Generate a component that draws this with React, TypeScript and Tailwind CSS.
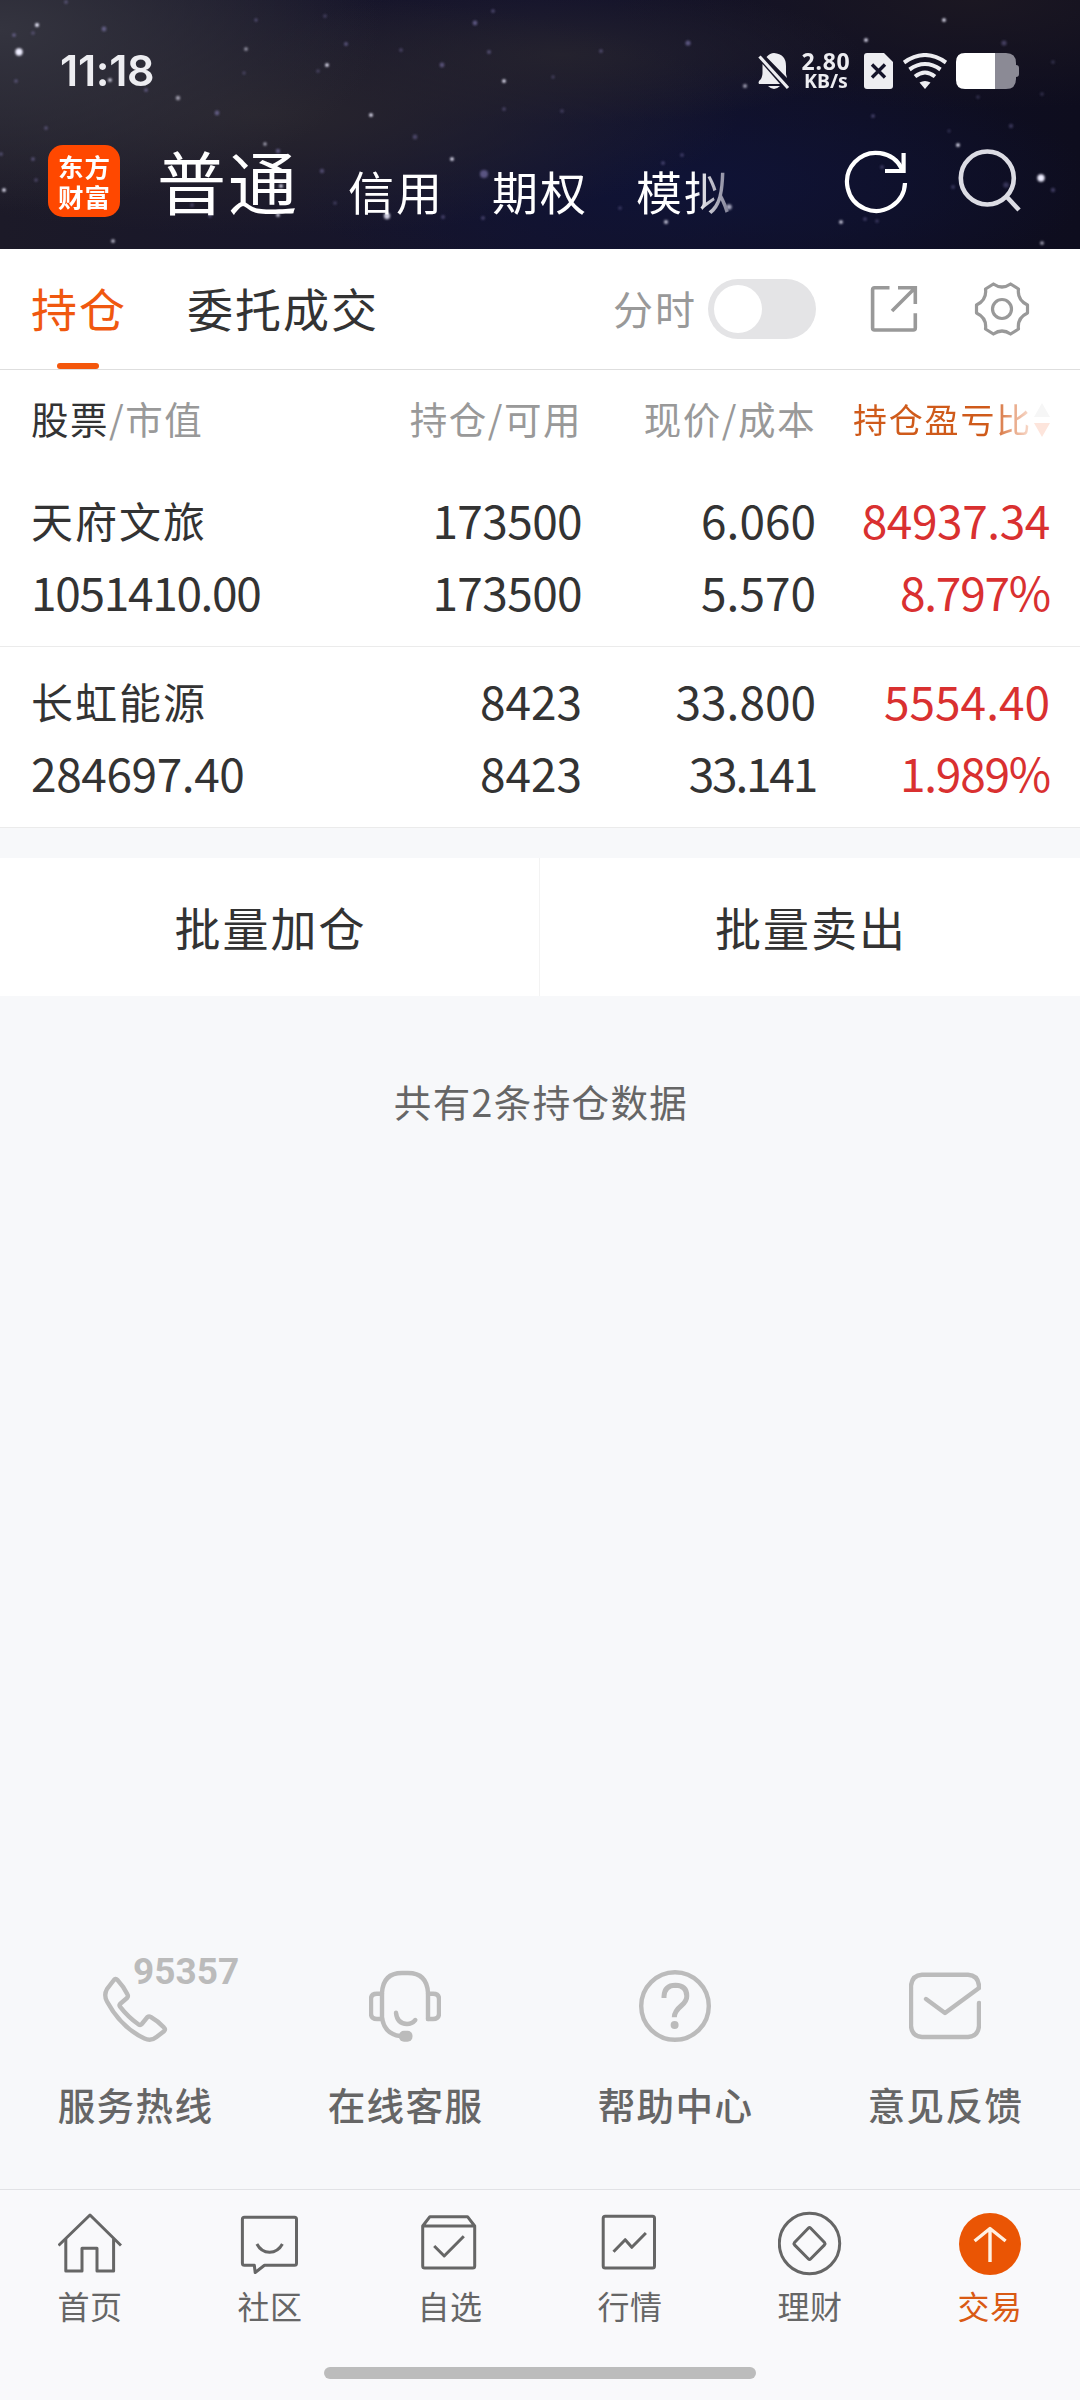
import { FC, ReactNode } from "react";
import clsx from "clsx";

type Holding = {
  name: string;
  value: string;
  amount: string;
  available: string;
  price: string;
  cost: string;
  profit: string;
  ratio: string;
};

const holdings: Holding[] = [
  {
    name: "天府文旅",
    value: "1051410.00",
    amount: "173500",
    available: "173500",
    price: "6.060",
    cost: "5.570",
    profit: "84937.34",
    ratio: "8.797%",
  },
  {
    name: "长虹能源",
    value: "284697.40",
    amount: "8423",
    available: "8423",
    price: "33.800",
    cost: "33.141",
    profit: "5554.40",
    ratio: "1.989%",
  },
];

// x, y, radius, opacity
const stars: number[][] = [
  [19, 52, 4, 1], [37, 25, 2.2, 1], [104, 29, 2.6, 0.5], [14, 35, 2, 0.5], [33, 33, 2, 0.35],
  [66, 2, 2, 0.4], [16, 81, 2, 0.4], [178, 98, 2.4, 0.6], [146, 90, 2, 0.5], [110, 80, 2, 0.9],
  [217, 113, 2.6, 0.5], [46, 128, 2, 0.4], [256, 20, 1.8, 0.4], [246, 49, 2, 0.6], [244, 73, 1.8, 0.3],
  [327, 65, 2, 1], [318, 71, 2, 0.3], [346, 44, 2.2, 0.45], [325, 16, 2, 0.3], [371, 115, 2, 1],
  [401, 50, 2, 0.35], [442, 65, 2.6, 0.45], [475, 23, 2.6, 0.5], [493, 11, 2, 0.4], [489, 52, 2.2, 0.4],
  [504, 81, 2, 1], [504, 109, 2, 0.35], [415, 137, 2.6, 0.35], [452, 159, 2, 1], [484, 174, 4.4, 0.5],
  [322, 171, 2.4, 0.4], [265, 144, 1.8, 0.7], [278, 151, 2.4, 0.5], [281, 186, 2, 1], [278, 215, 2, 0.9],
  [387, 216, 3.4, 0.85], [443, 217, 2.2, 0.35], [483, 218, 2.2, 0.35], [335, 203, 2, 0.3], [113, 241, 2, 0.8],
  [4, 190, 2, 1], [33, 159, 2, 0.45], [36, 180, 2, 0.35], [1, 154, 2, 0.4], [192, 205, 2, 0.4],
  [210, 216, 1.8, 0.4], [601, 51, 2, 0.4], [688, 43, 2.8, 0.5], [553, 77, 1.8, 0.3], [562, 111, 2, 0.3],
  [745, 86, 2.2, 0.65], [866, 40, 2, 1], [944, 20, 2, 1], [1004, 43, 2.8, 0.35], [1053, 62, 2, 0.25],
  [873, 116, 2, 0.4], [958, 145, 2, 1], [1011, 126, 2.4, 0.3], [1041, 178, 4, 1], [1053, 190, 2.4, 0.35],
  [666, 222, 2.2, 0.8], [841, 222, 2, 0.9], [865, 219, 2, 0.35], [877, 221, 2, 0.3], [1042, 243, 2, 0.7],
  [682, 155, 2, 0.35], [663, 163, 2, 0.4], [729, 207, 3, 0.7], [882, 167, 2, 0.35], [1006, 185, 3, 0.3],
  [953, 187, 2.2, 0.3], [620, 208, 2, 0.3], [978, 97, 2, 0.25], [1042, 94, 2, 0.25], [949, 131, 1.8, 0.25],
];

const Sky: FC = () => (
  <svg className="absolute inset-0" width="1080" height="249" viewBox="0 0 1080 249">
    <defs>
      <filter id="soft">
        <feGaussianBlur stdDeviation="0.8" />
      </filter>
    </defs>
    <g filter="url(#soft)">
      {stars.map(([x, y, r, o]) => (
        <circle
          key={`${x}-${y}`}
          cx={x}
          cy={y}
          r={r * 0.92}
          fill={o < 0.6 ? "#8f86c4" : "#eeedff"}
          opacity={o < 0.6 ? o * 1.1 : o}
        />
      ))}
    </g>
  </svg>
);

const StatusBar: FC = () => (
  <div className="relative flex h-[142px] items-center pr-[60px] pl-[60px] text-[#ededf1]">
    <span className="-mt-px font-['Inter'] text-[43px] font-semibold tracking-[-0.3px]">11:18</span>
    <div className="ml-auto flex items-center">
      <svg width="32" height="38" viewBox="0 0 32 38" fill="currentColor">
        <path d="M8.500 5 Q12 1 16 1 Q28 2 28 14 V22 L29 26 Z" />
        <path d="M4.500 12 L22 32 H1 Q0 31 1 29 Q4.500 26 4.500 21 Z" />
        <path d="M10 34 H22 Q16 40 10 34 Z" />
        <path d="M1.500 4.500 L30 36" stroke="currentColor" strokeWidth="3.2" />
      </svg>
      <div className="ml-[11px] flex w-[50px] flex-col items-center font-['Noto_Sans'] font-bold">
        <span className="text-[23px] leading-[20px] tracking-[0.8px]">2.80</span>
        <span className="text-[19.5px] leading-[20px]">KB/s</span>
      </div>
      <svg className="ml-[13px]" width="29" height="36" viewBox="0 0 29 36">
        <path d="M3 0 H20 L29 9 V33 Q29 36 26 36 H3 Q0 36 0 33 V3 Q0 0 3 0 Z" fill="currentColor" />
        <path d="M8 11.500 L21 24.500 M21 11.500 L8 24.500" stroke="#14132a" strokeWidth="3.4" />
      </svg>
      <svg
        className="ml-[10px]"
        width="44"
        height="36"
        viewBox="0 0 44 36"
        fill="none"
        stroke="currentColor"
        strokeWidth="4"
      >
        <path d="M1 9.500 Q22 -5.500 43 9.500" />
        <path d="M6.500 16.500 Q22 5.500 37.500 16.500" />
        <path d="M12 23.500 Q22 15.500 32 23.500" />
        <path d="M16.500 29.500 Q22 26.500 27.500 29.500 L22 36 Z" fill="currentColor" stroke="none" />
      </svg>
      <svg className="ml-[9px]" width="64" height="36" viewBox="0 0 64 36">
        <path d="M39 0 H50 Q60 0 60 10 V12 Q63 12 63 15 V21 Q63 24 60 24 V26 Q60 36 50 36 H39 Z" fill="#8b8a95" />
        <path d="M9 0 H39 V36 H9 Q0 36 0 27 V9 Q0 0 9 0 Z" fill="#fff" />
      </svg>
    </div>
  </div>
);

const Header: FC = () => (
  <header className="relative h-[249px] shrink-0 overflow-hidden bg-[radial-gradient(ellipse_380px_180px_at_0%_12%,#34343f_0%,transparent_100%),radial-gradient(ellipse_480px_120px_at_24%_46%,#28252e_0%,transparent_100%),radial-gradient(ellipse_300px_70px_at_52%_22%,#23212e_0%,transparent_100%),radial-gradient(ellipse_400px_120px_at_64%_74%,#0f1336_0%,transparent_100%),radial-gradient(ellipse_360px_110px_at_90%_0%,#1b1722_0%,transparent_100%),linear-gradient(90deg,#1c1a28_0%,#14132c_50%,#0f0f24_80%,#0e0d1e_100%)]">
    <Sky />
    <StatusBar />
    <div className="relative flex h-[107px] pl-[48px]">
      <div className="mt-[3px] flex h-[72px] w-[72px] flex-col items-center justify-center rounded-[15px] bg-[#ff4800] text-[25.5px] leading-[30px] font-bold tracking-[1px] text-white">
        <span className="-mr-px">东方</span>
        <span className="-mr-px">财富</span>
      </div>
      <div className="-mt-px ml-[37px] flex items-baseline whitespace-nowrap text-white">
        <span className="text-[69px] leading-[78px] tracking-[2px]">普通</span>
        <div className="ml-[49px] flex gap-[48px] text-[46px] leading-[60px] tracking-[2px]">
          <span>信用</span>
          <span>期权</span>
          <span className="bg-[linear-gradient(90deg,#fff_60%,#77778f_100%)] bg-clip-text text-transparent">模拟</span>
        </div>
      </div>
      <svg
        className="absolute top-[8px] left-[844px]"
        width="64"
        height="64"
        viewBox="0 0 64 64"
        fill="none"
        stroke="#fff"
        strokeWidth="4.200"
      >
        <path d="M61 33 A29 29 0 1 1 58 19" />
        <path d="M59.600 3 V21 H41" />
      </svg>
      <svg
        className="absolute top-[6px] left-[957px]"
        width="66"
        height="66"
        viewBox="0 0 66 66"
        fill="none"
        stroke="#dcdce4"
        strokeWidth="4.600"
      >
        <circle cx="30.300" cy="30" r="26.500" />
        <path d="M49 48 L62 62" />
      </svg>
    </div>
  </header>
);

const TabBar: FC = () => (
  <div className="flex h-[121px] shrink-0 items-center border-b border-[#dedede] pl-[31px] text-[46px] tracking-[2px] text-[#333]">
    <div className="relative flex h-full items-center pb-[3px] text-[#f0580f]">
      持仓
      <span className="absolute bottom-0 left-[26px] h-[6px] w-[42px] rounded-full bg-[#f4570c]" />
    </div>
    <span className="-mt-[3px] ml-[60px]">委托成交</span>
    <span className="-mt-[2px] ml-[234px] text-[40px] text-[#999]">分时</span>
    <div className="ml-[11px] flex h-[60px] w-[108px] items-center rounded-full bg-[#e4e4e6] pl-[6px]">
      <div className="h-[48px] w-[48px] rounded-full bg-white" />
    </div>
    <svg
      className="ml-[52px]"
      width="52"
      height="54"
      viewBox="0 0 52 54"
      fill="none"
      stroke="#999"
      strokeWidth="3.600"
    >
      <path d="M21.500 5.700 H6.600 Q4.600 5.700 4.600 7.700 V46 Q4.600 48 6.600 48 H45.300 Q47.300 48 47.300 46 V31.300" />
      <path d="M30 5.700 H47.300 V22 M46.500 6.500 L24 29" />
    </svg>
    <svg
      className="ml-[52px]"
      width="60"
      height="60"
      viewBox="-30 -30 60 60"
      fill="none"
      stroke="#999"
      strokeWidth="3.200"
      strokeLinejoin="round"
    >
      <path d="M-25.500 -4 Q-15 -9 -16.500 -20 L-8.600 -25 Q0 -19 8.600 -25 L16.500 -20 Q15 -9 25.500 -4 V4 Q15 9 16.500 20 L8.600 25 Q0 19 -8.600 25 L-16.500 20 Q-15 9 -25.500 4 Z" />
      <circle r="9.500" />
    </svg>
  </div>
);

const columns = "grid grid-cols-[270px_281px_234px_234px] px-[31px]";

const TableHead: FC = () => (
  <div className={`${columns} h-[96px] shrink-0 items-center text-right text-[37.5px] tracking-[1.5px] text-[#999]`}>
    <span className="text-left">
      <span className="text-[#333]">股票</span>/市值
    </span>
    <span>持仓/可用</span>
    <span>现价/成本</span>
    <div className="flex items-center justify-end text-[34px] tracking-[1.8px]">
      <span className="bg-[linear-gradient(90deg,#cf5a1a_76%,#fbe3d8_100%)] bg-clip-text text-transparent">
        持仓盈亏比
      </span>
      <svg className="mt-[3px] ml-[2px]" width="16" height="36" viewBox="0 0 16 36">
        <path d="M8 1 L16 15 H0 Z" fill="#f6f6f6" />
        <path d="M8 35 L16 21 H0 Z" fill="#fde5dc" />
      </svg>
    </div>
  </div>
);

const Num: FC<{ children: string; className?: string }> = ({ children, className }) => {
  const ones = children.split("1").length - 1;
  const percent = children.endsWith("%");
  return (
    <span
      className={clsx(
        "self-start leading-[66px]",
        percent && "tracking-[-1.2px]",
        !percent && ones === 0 && children.length > 7 && "tracking-[-0.4px]",
        !percent && ones === 1 && "tracking-[-0.6px]",
        ones === 2 && "tracking-[-2.2px]",
        ones === 3 && "tracking-[-1.3px]",
        className
      )}
    >
      {children}
    </span>
  );
};

const HoldingRow: FC<{ item: Holding }> = ({ item }) => (
  <div
    className={`${columns} h-[181px] shrink-0 grid-rows-[72px_72px] items-center border-b border-[#ebebeb] pt-[20px] text-right text-[46px] leading-[72px] text-[#333]`}
  >
    <span className="self-start text-left text-[42px] leading-[68px] tracking-[2px]">{item.name}</span>
    <Num>{item.amount}</Num>
    <Num>{item.price}</Num>
    <Num className="text-[#d93030]">{item.profit}</Num>
    <Num className="text-left">{item.value}</Num>
    <Num>{item.available}</Num>
    <Num>{item.cost}</Num>
    <Num className="text-[#d93030]">{item.ratio}</Num>
  </div>
);

const ServiceIcon: FC<{ children: ReactNode }> = ({ children }) => (
  <svg
    width="72"
    height="72"
    viewBox="0 0 72 72"
    fill="none"
    stroke="#bbb"
    strokeWidth="4.400"
    strokeLinecap="round"
    strokeLinejoin="round"
  >
    {children}
  </svg>
);

const services = [
  {
    label: "服务热线",
    badge: "95357",
    icon: (
      <path d="M14.500 10.500 Q16.400 7.800 18.500 10 Q25 17 28.500 24.500 Q29.500 26.300 28 28 L21 34 Q20 35.300 21 36.600 Q29 47 40 54.800 Q41.500 55.500 42.800 54 L48.500 47 Q50 45.800 51.800 47 Q59 51 65 57.500 Q66.800 59.300 65 61.200 L57.500 67 Q52 71.500 45.500 68.500 Q22 57.500 8 31.500 Q4.500 25 8 19 Z" />
    ),
  },
  {
    label: "在线客服",
    icon: (
      <>
        <path d="M59 49 V23 Q58 3 39 3 H33 Q14 3 13 23 V47 Q15 64 31 66" />
        <path d="M13 23.700 H8 Q2 23.700 2 29 V43.500 Q2 49 8 49 H13" />
        <path d="M59 23.700 H64 Q70 23.700 70 29 V43.500 Q70 49 64 49 H59" />
        <path d="M27 42.700 Q28 53.500 38 54 Q43 54 46.300 50" />
        <rect x="30" y="60.700" width="13.500" height="11" rx="5" fill="#bbb" stroke="none" />
      </>
    ),
  },
  {
    label: "帮助中心",
    icon: (
      <>
        <circle cx="36" cy="36" r="33.800" />
        <path
          d="M25 28 V26.500 Q25.500 15.300 36.500 15.300 Q47.800 15.600 47.800 26 Q47.800 31 42.500 35.500 Q35.300 41.500 35.300 47.300"
          strokeWidth="5"
          strokeLinecap="butt"
        />
        <circle cx="35.600" cy="55" r="4" fill="#bbb" stroke="none" />
      </>
    ),
  },
  {
    label: "意见反馈",
    icon: (
      <path d="M70 33 V56 Q69 66.500 59 67 H13 Q3 66.500 2 56 V15.700 Q3 5.200 13 4.700 H59 Q69 5.200 70 15.700 V18 L36 43 L17 29" />
    ),
  },
];

const navItems = [
  {
    label: "首页",
    icon: (
      <>
        <path d="M0.500 34.500 L32 4 L63 34.500" />
        <path d="M7.800 28 V60 H24 V37.300 H39 V60 H55.600 V28" />
      </>
    ),
  },
  {
    label: "社区",
    icon: (
      <>
        <path d="M6.400 6.300 H56.500 Q58.500 6.300 58.500 8.300 V52.300 Q58.500 54.300 56.500 54.300 H26.500 L17.200 61.500 L16.300 54.300 H6.400 Q4.400 54.300 4.400 52.300 V8.300 Q4.400 6.300 6.400 6.300 Z" />
        <path d="M18.900 33 Q23 41 31.600 41.300 Q40 41 44.400 33" />
      </>
    ),
  },
  {
    label: "自选",
    icon: (
      <>
        <path d="M4.700 15 L11.900 5.700 H49.500 L56.700 15 V55 Q56.700 57 54.700 57 H6.700 Q4.700 57 4.700 55 Z M4.700 15 H56.700" />
        <path d="M16.200 35 L26.200 45 L45.800 25.300" />
      </>
    ),
  },
  {
    label: "行情",
    icon: (
      <>
        <rect x="5.200" y="5.300" width="51.300" height="51.700" rx="2" />
        <path d="M15.500 40.700 L27.200 28.700 L33.800 36.300 L47.900 22" />
      </>
    ),
  },
  {
    label: "理财",
    icon: (
      <>
        <circle cx="31.500" cy="32.500" r="30.200" />
        <path d="M30.500 17 Q31.500 16 32.500 17 L46.500 31.500 Q47.500 32.700 46.500 33.900 L32.500 48 Q31.500 49 30.500 48 L16.500 33.900 Q15.500 32.700 16.500 31.500 Z" />
      </>
    ),
  },
  {
    label: "交易",
    active: true,
    icon: (
      <>
        <circle cx="32" cy="33" r="31" fill="#ea5504" stroke="none" />
        <path d="M32 51 V17 M16.600 30 L32 17.500 L47.600 30" stroke="#fff1e2" strokeWidth="3.400" />
      </>
    ),
  },
];

const App: FC = () => {
  return (
    <div className="flex h-[2400px] w-[1080px] flex-col overflow-hidden bg-[#f7f8fa] font-['Noto_Sans_CJK_SC',sans-serif]">
      <Header />
      <div className="flex shrink-0 flex-col bg-white">
        <TabBar />
        <TableHead />
        {holdings.map((item) => (
          <HoldingRow key={item.name} item={item} />
        ))}
      </div>

      <div className="mt-[30px] grid h-[138px] shrink-0 grid-cols-2 bg-white text-[46px] text-[#333]">
        <button className="border-r border-[#f3f3f3] pb-[2px] pl-[2px] tracking-[2px]">批量加仓</button>
        <button className="pb-[2px] pl-[2px] tracking-[2px]">批量卖出</button>
      </div>
      <p className="mt-[75px] pl-[2px] text-center text-[37.5px] leading-[60px] tracking-[1.4px] text-[#666]">
        共有2条持仓数据
      </p>

      <div className="mt-auto grid h-[219px] shrink-0 grid-cols-4">
        {services.map(({ label, icon, badge }) => (
          <div key={label} className="relative flex flex-col items-center">
            <ServiceIcon>{icon}</ServiceIcon>
            {badge && (
              <span className="absolute top-[-17px] left-[133px] font-['Roboto'] text-[37px] leading-[37px] font-bold text-[#bbb]">
                {badge}
              </span>
            )}
            <span className="mt-[32px] pl-px text-[37.5px] leading-[60px] font-medium tracking-[1.4px] text-[#666]">
              {label}
            </span>
          </div>
        ))}
      </div>

      <nav className="grid h-[178px] shrink-0 grid-cols-6 border-t border-[#e1e2e5] bg-[#f9f9fb] pt-[21px]">
        {navItems.map(({ label, icon, active }) => (
          <div
            key={label}
            className={`flex flex-col items-center ${active ? "text-[#d95a14]" : "text-[#666]"}`}
          >
            <svg
              width="64"
              height="66"
              viewBox="0 0 64 66"
              fill="none"
              stroke="currentColor"
              strokeWidth="3"
              strokeLinejoin="round"
            >
              {icon}
            </svg>
            <span className="mt-[8px] text-[32px] leading-[40px] tracking-[0.500px]">{label}</span>
          </div>
        ))}
      </nav>
      <div className="flex h-[33px] shrink-0 justify-center bg-[#f9f9fb]">
        <div className="h-[12px] w-[432px] rounded-full bg-[#bcbcbc]" />
      </div>
    </div>
  );
};

export default App;
